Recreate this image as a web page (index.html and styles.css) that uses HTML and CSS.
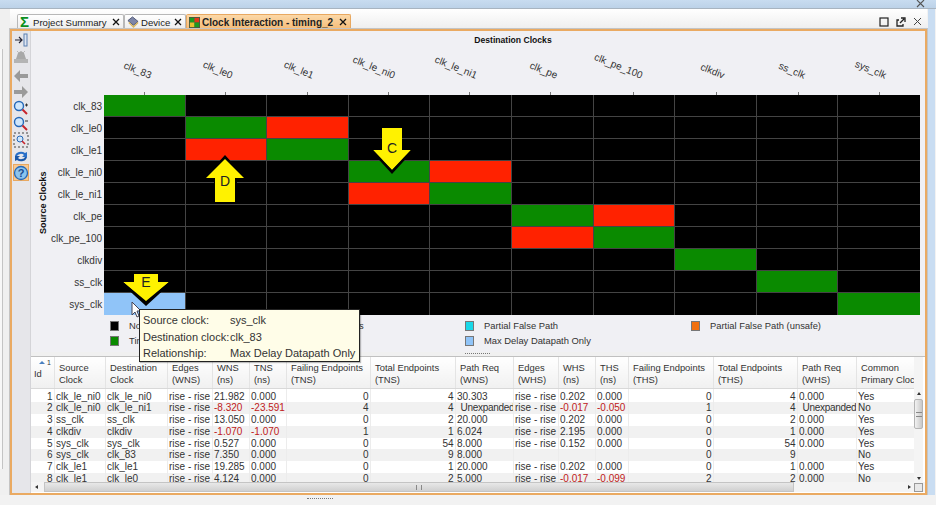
FILE: index.html
```html
<!DOCTYPE html>
<html lang="en">
<head>
    <meta charset="UTF-8">
    <title>Clock Interaction - timing_2</title>
    <link rel="stylesheet" href="styles.css">
</head>
<body>
    <div class="topbar">
        <svg class="win-close" width="9" height="9" viewBox="0 0 9 9"><path d="M1 1l7 7M8 1l-7 7" stroke="#555" stroke-width="1.1"/></svg>
    </div>
    <div class="work">
        <div class="side"><div class="side-box"></div></div>
        <div class="editor">
            <div class="tabs">
                <div class="tab tab-summary">
                    <span class="sigma">Σ</span><span class="tab-name">Project Summary</span>
                    <svg class="x" width="8" height="8" viewBox="0 0 8 8"><path d="M1 1l6 6M7 1l-6 6" stroke="#111" stroke-width="1.3"/></svg>
                </div>
                <div class="tab tab-device">
                    <svg width="12" height="12" viewBox="0 0 13 13"><path d="M1 5l5-4 6 5-5 4z" fill="#7d86a8" stroke="#4b5270"/><path d="M2 7l5 5 5-5" fill="none" stroke="#d8b860" stroke-width="1.4"/></svg>
                    <span class="tab-name">Device</span>
                    <svg class="x" width="8" height="8" viewBox="0 0 8 8"><path d="M1 1l6 6M7 1l-6 6" stroke="#111" stroke-width="1.3"/></svg>
                </div>
                <div class="tab tab-active">
                    <svg width="11" height="11" viewBox="0 0 12 12"><rect width="12" height="12" fill="#4a5a40"/><rect x="1" y="1" width="5" height="5" fill="#1c9a20"/><rect x="6" y="1" width="5" height="5" fill="#e03818"/><rect x="1" y="6" width="5" height="5" fill="#e8c030"/><rect x="6" y="6" width="5" height="5" fill="#1c9a20"/></svg>
                    <span class="tab-name">Clock Interaction - timing_2</span>
                    <svg class="x" width="8" height="8" viewBox="0 0 8 8"><path d="M1 1l6 6M7 1l-6 6" stroke="#111" stroke-width="1.3"/></svg>
                </div>
                <div class="tab-tools">
                    <svg width="10" height="10" viewBox="0 0 10 10"><rect x="1" y="1" width="8" height="8" fill="none" stroke="#222" stroke-width="1.2"/></svg>
                    <svg width="10" height="10" viewBox="0 0 10 10"><path d="M3 3H1v6h6V7" fill="none" stroke="#222" stroke-width="1.3"/><path d="M4 6l4-4M5 1h4v4" fill="none" stroke="#222" stroke-width="1.3"/></svg>
                    <svg width="9" height="9" viewBox="0 0 9 9"><path d="M1 1l7 7M8 1l-7 7" stroke="#444" stroke-width="1"/></svg>
                </div>
            </div>
            <div class="panel">
                <div class="toolbar">
                    <svg width="16" height="16" viewBox="0 0 16 16"><rect x="11" y="2" width="3" height="12" fill="#dfe6f2" stroke="#5a7fb0"/><path d="M2 8h7M6 5l3 3-3 3" fill="none" stroke="#223" stroke-width="1.2"/></svg>
                    <svg width="16" height="16" viewBox="0 0 16 16"><path d="M3 11l2-6 3-2 3 2 2 6z" fill="#a8a8a8"/><path d="M4 3l2 2M12 3l-2 2" stroke="#b8b8b8"/><rect x="1" y="11" width="14" height="4" fill="#b4b4b4"/></svg>
                    <svg class="after-sep" width="16" height="16" viewBox="0 0 16 16"><path d="M1 8l6-6v4h8v4H7v4z" fill="#9a9a9a"/></svg>
                    <svg width="16" height="16" viewBox="0 0 16 16"><path d="M15 8L9 2v4H1v4h8v4z" fill="#9a9a9a"/></svg>
                    <svg width="16" height="16" viewBox="0 0 16 16"><circle cx="6" cy="6" r="4.5" fill="#cfe6fa" stroke="#2468b8" stroke-width="1.4"/><path d="M9.5 9.5l4.5 4.5" stroke="#c8242c" stroke-width="2"/><path d="M12 5h3M13.5 3.5v3" stroke="#333"/></svg>
                    <svg width="16" height="16" viewBox="0 0 16 16"><circle cx="6" cy="6" r="4.5" fill="#cfe6fa" stroke="#2468b8" stroke-width="1.4"/><path d="M9.5 9.5l4.5 4.5" stroke="#c8242c" stroke-width="2"/><path d="M12 5h3" stroke="#333"/></svg>
                    <svg width="16" height="16" viewBox="0 0 16 16"><rect x="1" y="1" width="14" height="14" fill="none" stroke="#444" stroke-dasharray="2 2"/><circle cx="7" cy="7" r="3" fill="#cfe6fa" stroke="#2468b8"/><path d="M9 9l3 3" stroke="#c8242c" stroke-width="1.6"/></svg>
                    <svg width="16" height="16" viewBox="0 0 16 16"><path d="M2 8a6 5 0 0 1 10-3l2-1v5H9l2-2a4 3 0 0 0-7 1z" fill="#2a70c8"/><path d="M14 9a6 5 0 0 1-10 3l-2 1V8h5l-2 2a4 3 0 0 0 7-1z" fill="#1c58a8"/></svg>
                    <div class="help"><svg width="16" height="16" viewBox="0 0 16 16"><circle cx="8" cy="8" r="6.5" fill="#8cc4ee" stroke="#2468b8" stroke-width="1.3"/><text x="8" y="12" text-anchor="middle" class="help-mark">?</text></svg></div>
                </div>
                <div class="content">
                    <div class="chart">
                        <div class="chart-title">Destination Clocks</div>
                        <div class="col-labels">
                            <div class="col-label"><span>clk_83</span></div>
                            <div class="col-label"><span>clk_le0</span></div>
                            <div class="col-label"><span>clk_le1</span></div>
                            <div class="col-label"><span>clk_le_ni0</span></div>
                            <div class="col-label"><span>clk_le_ni1</span></div>
                            <div class="col-label"><span>clk_pe</span></div>
                            <div class="col-label"><span>clk_pe_100</span></div>
                            <div class="col-label"><span>clkdiv</span></div>
                            <div class="col-label"><span>ss_clk</span></div>
                            <div class="col-label"><span>sys_clk</span></div>
                        </div>
                        <div class="plot">
                            <div class="axis-title">Source Clocks</div>
                            <div class="row-labels">
                                <div>clk_83</div>
                                <div>clk_le0</div>
                                <div>clk_le1</div>
                                <div>clk_le_ni0</div>
                                <div>clk_le_ni1</div>
                                <div>clk_pe</div>
                                <div>clk_pe_100</div>
                                <div>clkdiv</div>
                                <div>ss_clk</div>
                                <div>sys_clk</div>
                            </div>
                            <div class="matrix">
                                <div class="g"></div><div></div><div></div><div></div><div></div><div></div><div></div><div></div><div></div><div></div>
                                <div></div><div class="g"></div><div class="r"></div><div></div><div></div><div></div><div></div><div></div><div></div><div></div>
                                <div></div><div class="r"></div><div class="g"></div><div></div><div></div><div></div><div></div><div></div><div></div><div></div>
                                <div></div><div></div><div></div><div class="g"></div><div class="r"></div><div></div><div></div><div></div><div></div><div></div>
                                <div></div><div></div><div></div><div class="r"></div><div class="g"></div><div></div><div></div><div></div><div></div><div></div>
                                <div></div><div></div><div></div><div></div><div></div><div class="g"></div><div class="r"></div><div></div><div></div><div></div>
                                <div></div><div></div><div></div><div></div><div></div><div class="r"></div><div class="g"></div><div></div><div></div><div></div>
                                <div></div><div></div><div></div><div></div><div></div><div></div><div></div><div class="g"></div><div></div><div></div>
                                <div></div><div></div><div></div><div></div><div></div><div></div><div></div><div></div><div class="g"></div><div></div>
                                <div class="b"></div><div></div><div></div><div></div><div></div><div></div><div></div><div></div><div></div><div class="g"></div>
                            </div>
                        </div>
                        <div class="legend">
                            <div class="key"><i class="sw-black"></i>No Interaction</div>
                            <div class="key"><i class="sw-grey"></i>User Ignored Paths</div>
                            <div class="key"><i class="sw-cyan"></i>Partial False Path</div>
                            <div class="key"><i class="sw-orange"></i>Partial False Path (unsafe)</div>
                            <div class="key"><i class="sw-green"></i>Timed</div>
                            <div class="key"><i class="sw-blue"></i>Max Delay Datapath Only</div>
                        </div>
                    </div>
                    <div class="splitter"><span></span></div>
                    <div class="table-area">
                        <div class="table-row">
                            <div class="table-clip">
                                <table>
                                    <colgroup>
                                        <col><col><col><col><col><col><col><col><col><col><col><col><col><col><col><col>
                                    </colgroup>
                                    <thead>
                                        <tr>
                                            <th class="id-head"><span class="sort"><b></b>1</span>Id</th>
                                            <th>Source<br>Clock</th>
                                            <th>Destination<br>Clock</th>
                                            <th>Edges<br>(WNS)</th>
                                            <th>WNS<br>(ns)</th>
                                            <th>TNS<br>(ns)</th>
                                            <th>Failing Endpoints<br>(TNS)</th>
                                            <th>Total Endpoints<br>(TNS)</th>
                                            <th>Path Req<br>(WNS)</th>
                                            <th>Edges<br>(WHS)</th>
                                            <th>WHS<br>(ns)</th>
                                            <th>THS<br>(ns)</th>
                                            <th>Failing Endpoints<br>(THS)</th>
                                            <th>Total Endpoints<br>(THS)</th>
                                            <th>Path Req<br>(WHS)</th>
                                            <th>Common<br>Primary Clock</th>
                                        </tr>
                                    </thead>
                                    <tbody>
                                        <tr><td class="n">1</td><td>clk_le_ni0</td><td>clk_le_ni0</td><td>rise - rise</td><td>21.982</td><td>0.000</td><td class="n">0</td><td class="n">4</td><td>30.303</td><td>rise - rise</td><td>0.202</td><td>0.000</td><td class="n">0</td><td class="n">4</td><td>0.000</td><td>Yes</td></tr>
                                        <tr><td class="n">2</td><td>clk_le_ni0</td><td>clk_le_ni1</td><td>rise - rise</td><td class="bad">-8.320</td><td class="bad">-23.591</td><td class="n">4</td><td class="n">4</td><td class="un">Unexpanded</td><td>rise - rise</td><td class="bad">-0.017</td><td class="bad">-0.050</td><td class="n">1</td><td class="n">4</td><td class="un">Unexpanded</td><td>No</td></tr>
                                        <tr><td class="n">3</td><td>ss_clk</td><td>ss_clk</td><td>rise - rise</td><td>13.050</td><td>0.000</td><td class="n">0</td><td class="n">2</td><td>20.000</td><td>rise - rise</td><td>0.202</td><td>0.000</td><td class="n">0</td><td class="n">2</td><td>0.000</td><td>Yes</td></tr>
                                        <tr><td class="n">4</td><td>clkdiv</td><td>clkdiv</td><td>rise - rise</td><td class="bad">-1.070</td><td class="bad">-1.070</td><td class="n">1</td><td class="n">1</td><td>6.024</td><td>rise - rise</td><td>2.195</td><td>0.000</td><td class="n">0</td><td class="n">1</td><td>0.000</td><td>Yes</td></tr>
                                        <tr><td class="n">5</td><td>sys_clk</td><td>sys_clk</td><td>rise - rise</td><td>0.527</td><td>0.000</td><td class="n">0</td><td class="n">54</td><td>8.000</td><td>rise - rise</td><td>0.152</td><td>0.000</td><td class="n">0</td><td class="n">54</td><td>0.000</td><td>Yes</td></tr>
                                        <tr><td class="n">6</td><td>sys_clk</td><td>clk_83</td><td>rise - rise</td><td>7.350</td><td>0.000</td><td class="n">0</td><td class="n">9</td><td>8.000</td><td></td><td></td><td></td><td class="n">0</td><td class="n">9</td><td></td><td>No</td></tr>
                                        <tr><td class="n">7</td><td>clk_le1</td><td>clk_le1</td><td>rise - rise</td><td>19.285</td><td>0.000</td><td class="n">0</td><td class="n">1</td><td>20.000</td><td>rise - rise</td><td>0.202</td><td>0.000</td><td class="n">0</td><td class="n">1</td><td>0.000</td><td>Yes</td></tr>
                                        <tr><td class="n">8</td><td>clk_le1</td><td>clk_le0</td><td>rise - rise</td><td>4.124</td><td>0.000</td><td class="n">0</td><td class="n">2</td><td>5.000</td><td>rise - rise</td><td class="bad">-0.017</td><td class="bad">-0.099</td><td class="n">2</td><td class="n">2</td><td>0.000</td><td>No</td></tr>
                                    </tbody>
                                </table>
                            </div>
                            <div class="vscroll">
                                <div class="up"></div>
                                <div class="vthumb"><span></span></div>
                                <div class="down"></div>
                            </div>
                        </div>
                        <div class="hscroll">
                            <div class="left"></div>
                            <div class="hthumb"><span></span></div>
                            <div class="right"></div>
                            <div class="corner"></div>
                        </div>
                    </div>

                    <!-- annotations drawn over the screenshot -->
                    <svg class="callout callout-d" width="46" height="50" viewBox="0 0 46 50"><path d="M23 0L44 23H35V48H12V23H2z" fill="#000"/><path d="M23 4L42 23H33V47H13V23H4z" fill="#fff200"/><text x="23" y="31" text-anchor="middle">D</text></svg>
                    <svg class="callout callout-c" width="46" height="50" viewBox="0 0 46 50"><path d="M13 2H33V24H42L23 44L4 24H13z" fill="#fff200"/><path d="M4 24L23 44L42 24L44 25L23 48L2 25z" fill="#000"/><text x="23" y="27" text-anchor="middle">C</text></svg>
                    <svg class="callout callout-e" width="50" height="32" viewBox="0 0 50 32"><path d="M13 0H37V8H48L25 28L2 8H13z" fill="#fff200"/><path d="M2 8L25 27L48 8L49 10L25 32L1 10z" fill="#000"/><text x="25" y="13" text-anchor="middle">E</text></svg>

                    <svg class="cursor" width="12" height="17" viewBox="0 0 12 17"><path d="M1 1v13l3-3 2 5 2-1-2-5h4z" fill="#fff" stroke="#445" stroke-width="1"/></svg>

                    <div class="tip">
                        <div><span>Source clock:</span>sys_clk</div>
                        <div><span>Destination clock:</span>clk_83</div>
                        <div><span>Relationship:</span>Max Delay Datapath Only</div>
                    </div>
                </div>
            </div>
        </div>
        <div class="edge"></div>
    </div>
    <div class="footer"><span></span></div>
</body>
</html>
```

FILE: styles.css
```css
* {
    box-sizing: border-box;
}

html, body {
    height: 100%;
}

body {
    margin: 0;
    overflow: hidden;
    display: flex;
    flex-direction: column;
    font-family: "Liberation Sans", Arial, sans-serif;
    font-size: 10px;
    color: #222;
    background-color: #f2f2f2;
}

.topbar {
    height: 9px;
    display: flex;
    justify-content: flex-end;
    padding-right: 11px;
    background: linear-gradient(#c8dcf0, #bcd2e8);
    border-bottom: 1px solid #a8b4c0;
}

.win-close {
    margin-top: -1px;
}

.work {
    flex: 1;
    min-height: 0;
    display: flex;
}

.side {
    width: 10px;
    padding-top: 40px;
    background-color: #f0f0f0;
}

.side-box {
    width: 3px;
    height: 420px;
    border-right: 1px solid #c4c4c4;
    background-color: #f8f8f8;
}

.editor {
    flex: 1;
    min-width: 0;
    display: flex;
    flex-direction: column;
}

.edge {
    width: 7px;
    margin-right: 1px;
    margin-left: 1px;
    background-color: #c9ddf2;
}

/* tabs */
.tabs {
    height: 20px;
    padding-top: 5px;
    padding-left: 7px;
    display: flex;
    background: linear-gradient(#fff, #eeeeee);
}

.tab {
    height: 15px;
    display: flex;
    align-items: center;
    gap: 2px;
    padding-left: 2px;
    font-size: 9.6px;
    color: #222;
    background: linear-gradient(#fff, #ececec);
    border: 1px solid #b8b8b8;
    border-bottom: none;
    border-radius: 2px 2px 0 0;
}

.tab-summary {
    width: 107px;
}

.tab-device {
    width: 62px;
}

.tab-active {
    width: 165px;
    font-size: 10px;
    font-weight: bold;
    background: linear-gradient(#fbd8a8, #f6bc78);
    border-color: #e8a860;
}

.sigma {
    width: 11px;
    font-size: 15px;
    line-height: 14px;
    font-weight: bold;
    color: #0a9020;
}

.tab-name {
    flex: 1;
    white-space: nowrap;
}

.x {
    flex: none;
    margin-right: 3px;
}

.tab-tools {
    margin-left: auto;
    padding-right: 5px;
    height: 15px;
    display: flex;
    align-items: center;
    gap: 7px;
}

.panel {
    flex: 1;
    min-height: 0;
    display: flex;
    border: 2px solid #eaaa62;
    outline: 1px solid #c4c4c4;
}

/* side toolbar */
.toolbar {
    width: 19px;
    display: flex;
    flex-direction: column;
    align-items: center;
    padding-top: 1px;
    background-color: #e6e6ea;
    border-right: 1px solid #d4d4d8;
}

.toolbar svg {
    flex: none;
}

.toolbar .after-sep {
    margin-top: 4px;
}

.help {
    width: 16px;
    height: 17px;
    display: flex;
    align-items: center;
    justify-content: center;
    background-color: #f8c890;
    border: 1px solid #e8a860;
}

.help-mark {
    font-size: 11px;
    font-weight: bold;
    fill: #1c4c90;
}

.content {
    flex: 1;
    min-width: 0;
    position: relative;
    display: flex;
    flex-direction: column;
}

/* chart */
.chart {
    height: 321px;
    flex: none;
    display: flex;
    flex-direction: column;
    background-color: #f0f0f4;
}

.chart-title {
    height: 15px;
    padding-top: 4px;
    padding-left: 70px;
    text-align: center;
    font-size: 8.6px;
    font-weight: bold;
    color: #111;
}

.col-labels {
    height: 49px;
    margin-left: 73px;
    width: 816px;
    display: grid;
    grid-template-columns: repeat(10, 1fr);
}

.col-label {
    display: flex;
    justify-content: flex-end;
    padding-right: 34px;
    padding-top: 24px;
    background: linear-gradient(#777, #777) center bottom / 1px 3px no-repeat;
    font-size: 10px;
    white-space: nowrap;
    color: #333;
}

.col-label span {
    height: 12px;
    transform: rotate(22deg);
    transform-origin: right center;
}

.plot {
    height: 220px;
    display: flex;
}

.axis-title {
    width: 13px;
    margin-left: 7px;
    padding-top: 4px;
    writing-mode: vertical-rl;
    transform: rotate(180deg);
    text-align: center;
    font-size: 9px;
    font-weight: bold;
    color: #111;
}

.row-labels {
    width: 53px;
    display: grid;
    grid-template-rows: repeat(10, 22px);
}

.row-labels div {
    padding-right: 7px;
    padding-top: 1px;
    line-height: 21px;
    text-align: right;
    white-space: nowrap;
    color: #333;
    background: linear-gradient(#777, #777) right center / 3px 1px no-repeat;
}

.matrix {
    width: 816px;
    display: grid;
    grid-template-columns: repeat(10, 1fr);
    grid-template-rows: repeat(10, 22px);
    background-color: #000;
}

.matrix div {
    border-right: 1px solid #444;
    border-bottom: 1px solid #444;
}

.matrix div:nth-child(10n) {
    border-right: none;
}

.matrix div:nth-last-child(-n+10) {
    border-bottom: none;
}

.matrix .g {
    background-color: #0a8a00;
}

.matrix .r {
    background-color: #ff2200;
}

.matrix .b {
    background-color: #90c4f8;
}

.legend {
    margin-top: 3px;
    padding-left: 79px;
    display: grid;
    grid-template-columns: 154px 201px 226px 1fr;
    grid-template-rows: 15px 15px;
    font-size: 9.4px;
    color: #333;
}

.legend .key:nth-child(5) {
    grid-column: 1;
}

.legend .key:nth-child(6) {
    grid-column: 3;
}

.key {
    display: flex;
    align-items: center;
    gap: 10px;
    white-space: nowrap;
}

.key i {
    width: 9px;
    height: 10px;
    border: 1px solid #777;
}

.sw-black { background-color: #000; }
.sw-grey { background-color: #b0b0b0; }
.sw-cyan { background-color: #19d8e8; }
.sw-orange { background-color: #f07010; }
.sw-green { background-color: #0a8a00; }
.sw-blue { background-color: #90c4f8; }

.splitter {
    height: 5px;
    flex: none;
    display: flex;
    justify-content: center;
    padding-right: 1px;
    background-color: #f0f0f0;
    border-bottom: 1px solid #c0c0c0;
}

.splitter span {
    width: 25px;
    height: 1px;
    margin-top: 1px;
    border-top: 1px dotted #777;
}

/* table */
.table-area {
    flex: 1;
    min-height: 0;
    display: flex;
    flex-direction: column;
    background-color: #fff;
}

.table-row {
    flex: 1;
    min-height: 0;
    display: flex;
}

.table-clip {
    flex: 1;
    min-width: 0;
    overflow: hidden;
}

table {
    width: 905px;
    table-layout: fixed;
    border-collapse: collapse;
    font-size: 10px;
}

col:nth-child(1) { width: 23px; }
col:nth-child(2) { width: 51px; }
col:nth-child(3) { width: 62px; }
col:nth-child(4) { width: 45px; }
col:nth-child(5) { width: 37px; }
col:nth-child(6) { width: 37px; }
col:nth-child(7) { width: 84px; }
col:nth-child(8) { width: 85px; }
col:nth-child(9) { width: 58px; }
col:nth-child(10) { width: 45px; }
col:nth-child(11) { width: 37px; }
col:nth-child(12) { width: 33px; }
col:nth-child(13) { width: 85px; }
col:nth-child(14) { width: 84px; }
col:nth-child(15) { width: 59px; }
col:nth-child(16) { width: 80px; }

th {
    height: 31px;
    padding: 5px 0 0 4.5px;
    text-align: left;
    vertical-align: top;
    font-size: 9.4px;
    font-weight: normal;
    line-height: 11.5px;
    white-space: nowrap;
    overflow: hidden;
    color: #333;
    background: linear-gradient(#fff, #f0f0f0);
    border-right: 1px solid #e4e4e4;
    border-bottom: 1px solid #d8d8d8;
}

.id-head {
    padding-top: 11px;
    padding-left: 3px;
}

.sort {
    display: flex;
    align-items: center;
    gap: 2px;
    height: 7px;
    margin-top: -9px;
    margin-bottom: 2px;
    padding-left: 5px;
    font-size: 7px;
}

.sort b {
    border-left: 3px solid transparent;
    border-right: 3px solid transparent;
    border-bottom: 3px solid #4a80c0;
}

td {
    height: 11.75px;
    padding: 0 0 0 1.5px;
    line-height: 11.75px;
    white-space: nowrap;
    overflow: hidden;
    color: #333;
    border-right: 1px solid #ececec;
}

tbody tr:nth-child(even) td {
    background-color: #f1f1f1;
}

tbody tr:first-child td {
    padding-top: 2px;
    height: 13.75px;
}

td.n {
    padding-right: 1px;
    text-align: right;
}

td.bad {
    color: #c02020;
}

td.un {
    padding-left: 5px;
    letter-spacing: -0.3px;
}

.vscroll {
    width: 9px;
    flex: none;
    display: flex;
    flex-direction: column;
    justify-content: space-between;
    margin-right: 2px;
    padding-top: 33px;
    background-color: #f4f4f4;
}

.up, .down {
    width: 0;
    height: 0;
    margin: 2px auto;
    border-left: 2px solid transparent;
    border-right: 2px solid transparent;
}

.up {
    border-bottom: 3px solid #333;
}

.down {
    border-top: 3px solid #333;
}

.vthumb {
    height: 30px;
    margin-bottom: auto;
    margin-top: 2px;
    display: flex;
    align-items: center;
    justify-content: center;
    background: linear-gradient(90deg, #f2f2f2, #c8c8c8);
    border: 1px solid #b4b4b4;
    border-radius: 2px;
}

.vthumb span {
    width: 6px;
    height: 5px;
    border-top: 1px solid #888;
    border-bottom: 1px solid #888;
}

.hscroll {
    height: 10px;
    flex: none;
    display: flex;
    align-items: center;
    margin-bottom: 1px;
    background-color: #f4f4f4;
}

.left {
    width: 0;
    height: 0;
    margin-left: 4px;
    border-top: 2px solid transparent;
    border-bottom: 2px solid transparent;
    border-right: 3px solid #333;
}

.hthumb {
    width: 750px;
    height: 10px;
    margin-left: 6px;
    display: flex;
    align-items: center;
    justify-content: center;
    background: linear-gradient(#e8e8e8, #d0d0d0);
    border: 1px solid #c4c4c4;
}

.hthumb span {
    width: 6px;
    height: 5px;
    border-left: 1px solid #888;
    border-right: 1px solid #888;
}

.right {
    width: 0;
    height: 0;
    margin-left: auto;
    margin-right: 3px;
    border-top: 2px solid transparent;
    border-bottom: 2px solid transparent;
    border-left: 3px solid #333;
}

.corner {
    width: 9px;
    height: 9px;
    margin-right: 2px;
    border: 1px solid #999;
    background-color: #e8e8e8;
}

/* things lying over the chart */
.callout {
    position: absolute;
    font-size: 14px;
    fill: #222;
}

.callout-d {
    left: 171px;
    top: 124px;
}

.callout-c {
    left: 338px;
    top: 95px;
}

.callout-e {
    left: 90px;
    top: 243px;
}

.cursor {
    position: absolute;
    left: 100px;
    top: 270px;
}

.tip {
    position: absolute;
    left: 108px;
    top: 278px;
    width: 221px;
    height: 53px;
    padding: 2px 3px;
    font-size: 11px;
    line-height: 16.7px;
    white-space: nowrap;
    color: #333;
    background-color: #fffde8;
    border: 1px solid #222;
    box-shadow: 1px 1px 1px rgba(0, 0, 0, 0.25);
}

.tip span {
    display: inline-block;
    width: 87px;
}

.footer {
    height: 10px;
    flex: none;
    display: flex;
    justify-content: center;
    padding-right: 297px;
    background-color: #f2f2f2;
}

.footer span {
    width: 26px;
    height: 1px;
    margin-top: 3px;
    border-top: 1px dotted #777;
}
```
